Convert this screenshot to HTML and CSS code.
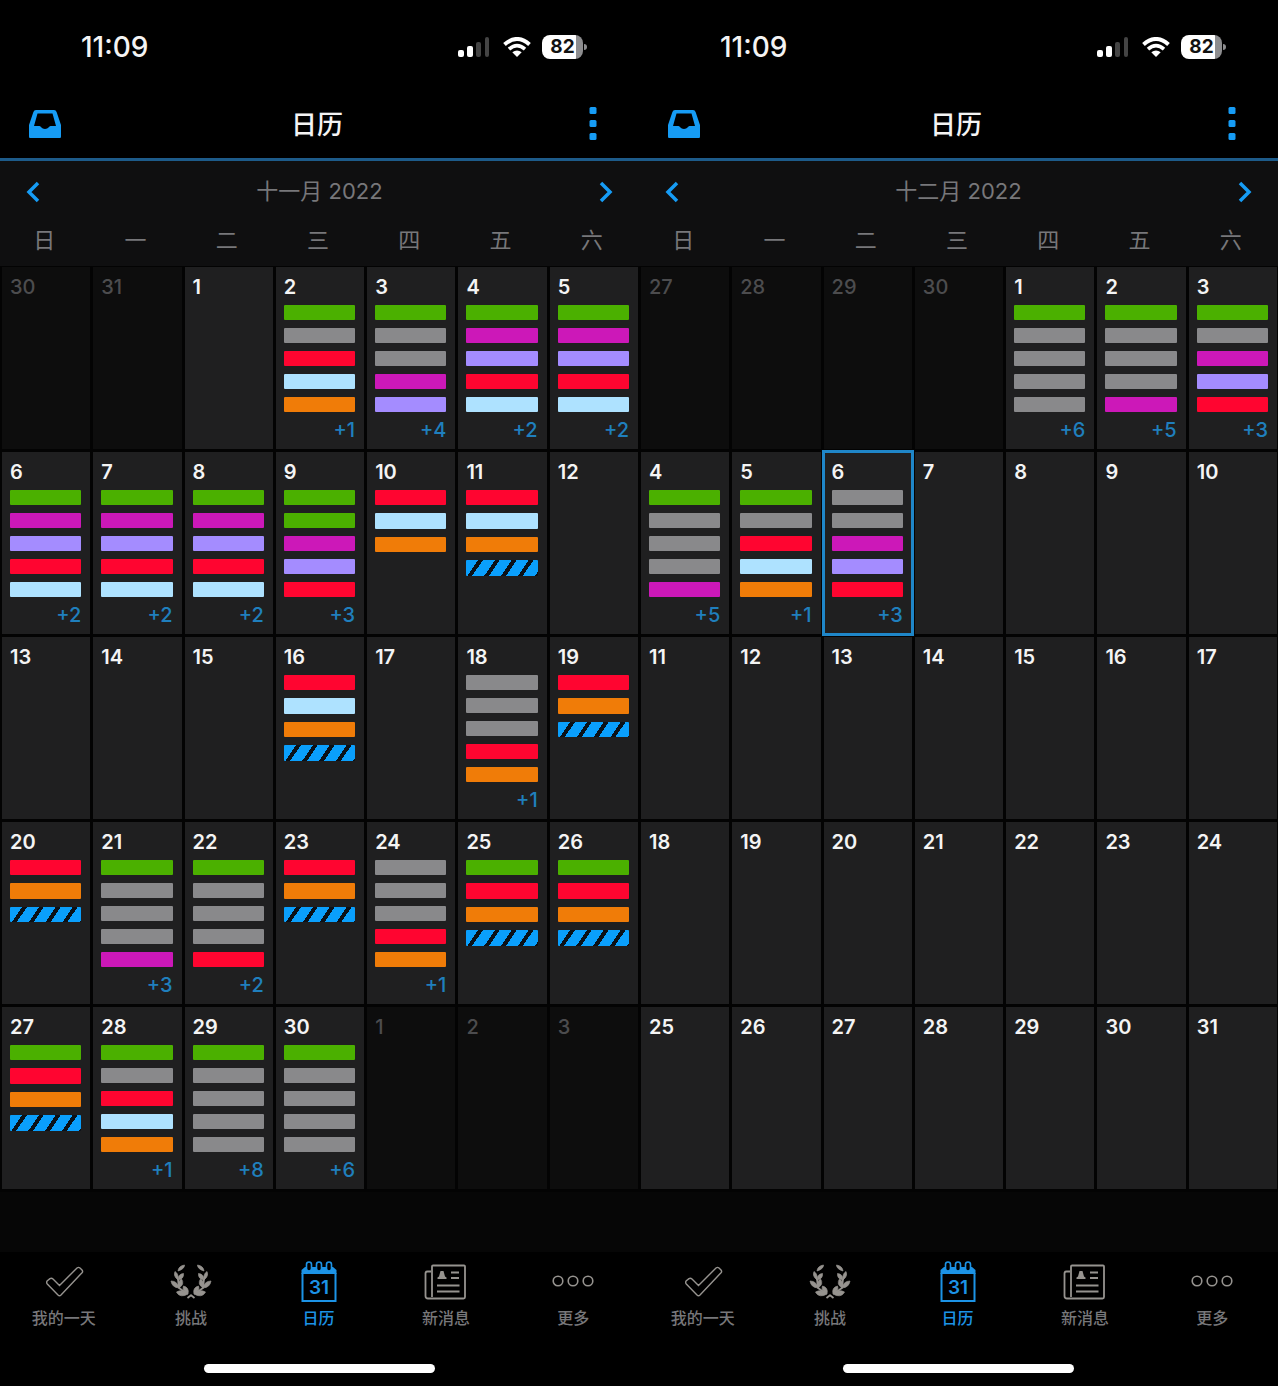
FILE: index.html
```html
<!DOCTYPE html>
<html lang="zh-CN">
<head>
    <meta charset="UTF-8">
    <meta name="viewport" content="width=device-width, initial-scale=1.0">
    <title>日历</title>
    <link rel="stylesheet" href="styles.css">
</head>
<body>
    <!-- shared icons -->
    <svg class="sprite" aria-hidden="true">
        <symbol id="signal" viewBox="0 0 32 20">
            <g fill="#fff">
                <rect x="0" y="13" width="6" height="7" rx="2"/>
                <rect x="9" y="9" width="6" height="11" rx="2"/>
            </g>
            <g fill="#444">
                <rect x="18" y="5" width="5" height="15" rx="2"/>
                <rect x="27" y="0" width="4" height="20" rx="2"/>
            </g>
        </symbol>
        <symbol id="wifi" viewBox="0 0 28 20">
            <g fill="none" stroke="#fff" stroke-width="4">
                <path d="M1.5 7.5Q14 -3.500 26.500 7.500"/>
                <path d="M6 12.200Q14 5 22 12.200" stroke-width="3.600"/>
            </g>
            <path d="M9.300 15.300Q14 11.500 18.700 15.300L14 20Z" fill="#fff"/>
        </symbol>
        <symbol id="inbox" viewBox="0 0 32 28">
            <path fill="currentColor" fill-rule="evenodd" d="M7 0H25Q27 0 27.600 2L32 15V26.500Q32 28 31 28H1Q0 28 0 26.500V15L4.400 2Q5 0 7 0ZM8.500 3.500L5 16H10.500C12 16 12.500 19 16 19S20 16 21.500 16H27L23.500 3.500Z"/>
        </symbol>
        <symbol id="dots" viewBox="0 0 8 34">
            <g fill="currentColor">
                <rect x="0.500" y="0" width="7" height="7" rx="1.500"/>
                <rect x="0.500" y="13" width="7" height="7" rx="1.500"/>
                <rect x="0.500" y="26" width="7" height="7" rx="1.500"/>
            </g>
        </symbol>
        <symbol id="prev" viewBox="0 0 14 22">
            <path d="M12 2L3 11L12 20" fill="none" stroke="currentColor" stroke-width="3.500"/>
        </symbol>
        <symbol id="next" viewBox="0 0 14 22">
            <path d="M2 2L11 11L2 20" fill="none" stroke="currentColor" stroke-width="3.500"/>
        </symbol>
        <symbol id="check" viewBox="0 0 44 42">
            <path d="M5.300 20.800L8 18.600Q9.500 17.600 11 19L17.500 25.400L35 8Q36.500 6.800 38 8L40 10Q41.200 11.400 40 12.800L19 35Q17.500 36.500 16 35L5.300 24Q4 22.400 5.300 20.800Z" fill="none" stroke="currentColor" stroke-width="1.400"/>
        </symbol>
        <symbol id="half-laurel" viewBox="0 0 44 42">
            <g fill="currentColor" stroke="currentColor" stroke-width="0.700">
                <path d="M9 11Q9.500 6 15.500 5Q15.500 9 9 11Z"/>
                <path d="M9 20Q4 16 6 11.500Q10 14 9 20Z"/>
                <path d="M9 20Q9 14 14.500 13.500Q15 19 9 20Z"/>
                <path d="M10 28Q3 27.500 2 21Q8.500 21 10 28Z"/>
                <path d="M10 28Q8 21.500 12.500 19Q16 24 10 28Z"/>
                <path d="M19 34Q11 38.500 7.500 32Q13.500 28.500 19 34Z"/>
                <path d="M19 34Q12.500 30.500 14.500 26Q20.500 27.500 19 34Z"/>
            </g>
            <path d="M9 19L10 28L18 33.500M18.500 38L22.300 35" fill="none" stroke="currentColor" stroke-width="1.800"/>
        </symbol>
        <symbol id="laurel" viewBox="0 0 44 42">
            <use href="#half-laurel" width="44" height="42"/>
            <use href="#half-laurel" width="44" height="42" transform="translate(44 0) scale(-1 1)"/>
        </symbol>
        <symbol id="calendar" viewBox="0 0 44 42">
            <path d="M5.500 13V41H38.500V13" fill="none" stroke="currentColor" stroke-width="2"/>
            <path d="M4.500 14V10L8 7H36L39.500 10V14Z" fill="currentColor"/>
            <g fill="#000" stroke="currentColor" stroke-width="1.600">
                <rect x="9.500" y="2" width="5" height="9" rx="2.500"/>
                <rect x="19.500" y="2" width="5" height="9" rx="2.500"/>
                <rect x="29.500" y="2" width="5" height="9" rx="2.500"/>
            </g>
            <text class="icon-day" x="22" y="34" text-anchor="middle" fill="currentColor">31</text>
        </symbol>
        <symbol id="news" viewBox="0 0 44 42">
            <g fill="none" stroke="currentColor" stroke-width="1.800">
                <path d="M8 37V6.500Q8 5.500 9 5.500H40Q41 5.500 41 6.500V37Q41 38.500 39.500 38.500H4Q1.500 38.500 1.500 36V13.500Q1.500 11.500 3.500 11.500H7"/>
                <path d="M27 12.500H35M27 18H35M13 25.500H35.500M13 31.500H35.500"/>
            </g>
            <path d="M13.500 19V17.500L15 16.500L16.500 11H19.500L21 16.500L22.500 17.500V19Z" fill="currentColor"/>
        </symbol>
        <symbol id="more" viewBox="0 0 44 42">
            <g fill="none" stroke="currentColor" stroke-width="1.600">
                <circle cx="7" cy="21" r="4.800"/>
                <circle cx="22" cy="21" r="4.800"/>
                <circle cx="37" cy="21" r="4.800"/>
            </g>
        </symbol>
    </svg>

    <main class="screens">
        <section class="phone">
            <div class="status">
                <span class="time">11:09</span>
                <svg class="signal"><use href="#signal"/></svg>
                <svg class="wifi"><use href="#wifi"/></svg>
                <span class="battery"><span class="level">82</span></span>
            </div>
            <header class="navbar">
                <button class="icon-btn" aria-label="收件箱"><svg class="inbox"><use href="#inbox"/></svg></button>
                <h1>日历</h1>
                <button class="icon-btn menu" aria-label="菜单"><svg class="dots"><use href="#dots"/></svg></button>
            </header>
            <div class="month">
                <button class="icon-btn" aria-label="上个月"><svg class="arrow"><use href="#prev"/></svg></button>
                <h2>十一月 2022</h2>
                <button class="icon-btn" aria-label="下个月"><svg class="arrow"><use href="#next"/></svg></button>
            </div>
            <table class="calendar" id="november">
                <thead>
                    <tr><th>日</th><th>一</th><th>二</th><th>三</th><th>四</th><th>五</th><th>六</th></tr>
                </thead>
                <tbody></tbody>
            </table>
            <nav class="tabs">
                <a href="#"><svg><use href="#check"/></svg>我的一天</a>
                <a href="#"><svg><use href="#laurel"/></svg>挑战</a>
                <a href="#" class="active"><svg><use href="#calendar"/></svg>日历</a>
                <a href="#"><svg><use href="#news"/></svg>新消息</a>
                <a href="#"><svg><use href="#more"/></svg>更多</a>
            </nav>
            <div class="home"></div>
        </section>

        <section class="phone">
            <div class="status">
                <span class="time">11:09</span>
                <svg class="signal"><use href="#signal"/></svg>
                <svg class="wifi"><use href="#wifi"/></svg>
                <span class="battery"><span class="level">82</span></span>
            </div>
            <header class="navbar">
                <button class="icon-btn" aria-label="收件箱"><svg class="inbox"><use href="#inbox"/></svg></button>
                <h1>日历</h1>
                <button class="icon-btn menu" aria-label="菜单"><svg class="dots"><use href="#dots"/></svg></button>
            </header>
            <div class="month">
                <button class="icon-btn" aria-label="上个月"><svg class="arrow"><use href="#prev"/></svg></button>
                <h2>十二月 2022</h2>
                <button class="icon-btn" aria-label="下个月"><svg class="arrow"><use href="#next"/></svg></button>
            </div>
            <table class="calendar" id="december">
                <thead>
                    <tr><th>日</th><th>一</th><th>二</th><th>三</th><th>四</th><th>五</th><th>六</th></tr>
                </thead>
                <tbody></tbody>
            </table>
            <nav class="tabs">
                <a href="#"><svg><use href="#check"/></svg>我的一天</a>
                <a href="#"><svg><use href="#laurel"/></svg>挑战</a>
                <a href="#" class="active"><svg><use href="#calendar"/></svg>日历</a>
                <a href="#"><svg><use href="#news"/></svg>新消息</a>
                <a href="#"><svg><use href="#more"/></svg>更多</a>
            </nav>
            <div class="home"></div>
        </section>
    </main>
    <script src="calendar.js"></script>
</body>
</html>
```
FILE: styles.css
```css
* {
    box-sizing: border-box;
}
body {
    margin: 0;
    background: #000;
    color: #f4f4f4;
    font-family: Inter, "Noto Sans CJK SC", sans-serif;
}
button {
    font: inherit;
    color: inherit;
    background: none;
    border: none;
    padding: 0;
    cursor: pointer;
}
h1,
h2 {
    margin: 0;
}
.sprite {
    display: none;
}
.screens {
    display: flex;
    min-height: 100vh;
}
.phone {
    flex: 1;
    min-width: 0;
    display: flex;
    flex-direction: column;
    overflow: hidden;
    background: #060606;
}

/* status bar */
.status {
    display: flex;
    align-items: center;
    height: 90px;
    padding: 4px 56px 0 81px;
    background: #000;
}
.time {
    margin-right: auto;
    font-size: 28px;
    font-weight: 500;
}
.signal {
    width: 32px;
    height: 20px;
    margin-right: 13px;
}
.wifi {
    width: 28px;
    height: 20px;
    margin-right: 11px;
}
.battery {
    position: relative;
    width: 41px;
    height: 24px;
    border-radius: 8px;
    background: linear-gradient(to right, #fff 34px, #8d8d8f 34px);
    color: #111;
    font-size: 19px;
    font-weight: 700;
    line-height: 24px;
}
.battery::after {
    content: "";
    position: absolute;
    left: 42px;
    top: 9px;
    width: 3px;
    height: 6px;
    border-radius: 0 3px 3px 0;
    background: #8d8d8f;
}
.level {
    display: block;
    text-align: center;
}

/* title bar */
.navbar {
    display: flex;
    align-items: center;
    justify-content: space-between;
    height: 71px;
    padding: 0 30px 0 29px;
    background: #000;
    border-bottom: 3px solid #1d5b8a;
}
.navbar h1 {
    margin: 0 4px 4px 0;
    font-size: 26px;
    font-weight: 500;
}
.icon-btn {
    display: flex;
    color: #169cf5;
}
.navbar .icon-btn {
    width: 32px;
}
.navbar .menu {
    justify-content: center;
}
.inbox {
    width: 32px;
    height: 28px;
}
.dots {
    width: 8px;
    height: 34px;
}
.month {
    display: flex;
    align-items: center;
    justify-content: space-between;
    height: 61px;
    padding: 0 26px;
    background: #0f0f10;
    color: #77777a;
}
.month h2 {
    margin-bottom: 5px;
    font-size: 22px;
    font-weight: 400;
}
.arrow {
    width: 14px;
    height: 22px;
}

/* month grid, its outer gaps run slightly past the screen edge */
.calendar {
    width: calc(100% + 3px);
    margin: 0 -1px;
    table-layout: fixed;
    border-collapse: separate;
    border-spacing: 3px;
    background: linear-gradient(#0f0f10 44px, #030303 44px);
}
.calendar th {
    height: 39px;
    padding: 0 4px 8px 0;
    color: #77777a;
    font-size: 22px;
    font-weight: 400;
    line-height: 31px;
}
.calendar td {
    padding: 0;
    background: #1f1f20;
}
.calendar .other {
    background: #0d0d0d;
    color: #4c4c4e;
}
.calendar .selected {
    outline: 3px solid #1f86c8;
    outline-offset: -1px;
}
.day {
    display: flex;
    flex-direction: column;
    width: 100%;
    height: 182px;
    padding: 9px 9px 8px 8px;
    font-size: 20px;
    font-weight: 600;
    line-height: 22px;
    text-align: left;
}
.other .day {
    font-weight: 500;
}
.bars {
    display: grid;
    grid-template-rows: repeat(5, 1fr);
    gap: 8px;
    width: 100%;
    height: 109px;
    margin: 7px 0;
}
.bar {
    border-radius: 1px;
}
.green { background: #4bb000; }
.gray { background: #89898b; }
.red { background: #ff0530; }
.sky { background: #aee2ff; }
.orange { background: #f07c08; }
.magenta { background: #cc18b8; }
.violet { background: #a48cff; }
.striped {
    background: repeating-linear-gradient(124deg, #0a9ffc 0 10px, #0b1118 10px 14px);
}
.extra {
    align-self: flex-end;
    color: #1f7fbd;
    font-weight: 500;
}

/* bottom tabs */
.tabs {
    display: flex;
    margin-top: auto;
    padding: 8px 2px 0 0;
    background: #000;
}
.tabs a {
    flex: 1;
    display: flex;
    flex-direction: column;
    align-items: center;
    gap: 6px;
    color: #77777a;
    font-size: 16px;
    font-weight: 500;
    line-height: 20px;
    text-decoration: none;
}
.tabs svg {
    width: 44px;
    height: 42px;
    color: #96938f;
}
.tabs .active,
.tabs .active svg {
    color: #1c93e6;
}
.icon-day {
    font-size: 19px;
    font-weight: 600;
}
.home {
    height: 58px;
    padding-top: 36px;
    background: #000;
}
.home::before {
    content: "";
    display: block;
    width: 36%;
    height: 9px;
    margin: 0 auto;
    border-radius: 5px;
    background: #fff;
}
```
FILE: calendar.js
```js
const colors = {
    g: "green",
    x: "gray",
    r: "red",
    s: "sky",
    o: "orange",
    m: "magenta",
    v: "violet",
    b: "striped"
};

// day number -> [bars, hidden count]
const november = {
    2: ["gxrso", 1], 3: ["gxxmv", 4], 4: ["gmvrs", 2], 5: ["gmvrs", 2],
    6: ["gmvrs", 2], 7: ["gmvrs", 2], 8: ["gmvrs", 2], 9: ["ggmvr", 3],
    10: ["rso"], 11: ["rsob"],
    16: ["rsob"], 18: ["xxxro", 1], 19: ["rob"],
    20: ["rob"], 21: ["gxxxm", 3], 22: ["gxxxr", 2], 23: ["rob"],
    24: ["xxxro", 1], 25: ["grob"], 26: ["grob"],
    27: ["grob"], 28: ["gxrso", 1], 29: ["gxxxx", 8], 30: ["gxxxx", 6]
};
const december = {
    1: ["gxxxx", 6], 2: ["gxxxm", 5], 3: ["gxmvr", 3],
    4: ["gxxxm", 5], 5: ["gxrso", 1], 6: ["xxmvr", 3]
};

function renderMonth(id, year, month, events, selected) {
    const body = document.querySelector("#" + id + " tbody");
    const last = new Date(year, month, 0);
    const date = new Date(year, month - 1, 1);
    date.setDate(1 - date.getDay());
    while (date <= last) {
        const row = body.insertRow();
        for (let i = 0; i < 7; i++) {
            const cell = row.insertCell();
            const day = date.getDate();
            const inMonth = date.getMonth() === month - 1;
            const [bars = "", extra] = (inMonth && events[day]) || [];
            if (!inMonth) cell.className = "other";
            if (inMonth && day === selected) cell.className = "selected";
            let html = "<span>" + day + "</span>";
            if (bars) {
                html += '<span class="bars">';
                for (const c of bars) {
                    html += '<span class="bar ' + colors[c] + '"></span>';
                }
                html += "</span>";
            }
            if (extra) html += '<span class="extra">+' + extra + "</span>";
            cell.innerHTML = '<button class="day">' + html + "</button>";
            date.setDate(day + 1);
        }
    }
}

renderMonth("november", 2022, 11, november);
renderMonth("december", 2022, 12, december, 6);
```
